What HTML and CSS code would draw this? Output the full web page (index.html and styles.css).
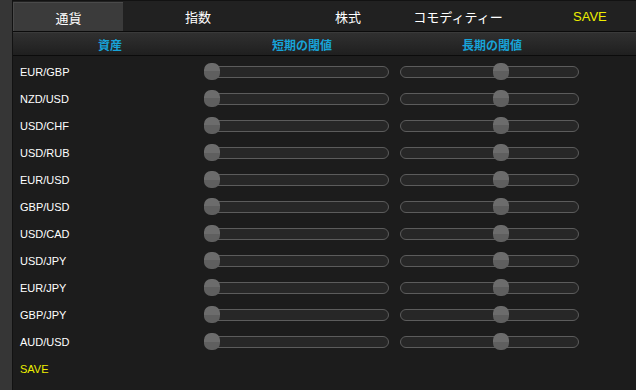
FILE: index.html
```html
<!DOCTYPE html>
<html lang="ja">
<head>
<meta charset="utf-8">
<link rel="stylesheet" href="styles.css">
</head>
<body>
<div class="app">
  <nav class="tabs">
    <div class="tab t1 active">通貨</div>
    <div class="tab t2">指数</div>
    <div class="tab t3">株式</div>
    <div class="tab t4">コモディティー</div>
    <div class="tab t5 save">SAVE</div>
  </nav>
  <div class="head">
    <div class="hc">資産</div>
    <div class="hc">短期の閾値</div>
    <div class="hc">長期の閾値</div>
  </div>
  <div class="rows">
    <div class="row"><div class="lbl">EUR/GBP</div><div class="c2"><div class="track s1"><span class="thumb a"></span></div></div><div class="c3"><div class="track s2"><span class="thumb b"></span></div></div></div>
    <div class="row"><div class="lbl">NZD/USD</div><div class="c2"><div class="track s1"><span class="thumb a"></span></div></div><div class="c3"><div class="track s2"><span class="thumb b"></span></div></div></div>
    <div class="row"><div class="lbl">USD/CHF</div><div class="c2"><div class="track s1"><span class="thumb a"></span></div></div><div class="c3"><div class="track s2"><span class="thumb b"></span></div></div></div>
    <div class="row"><div class="lbl">USD/RUB</div><div class="c2"><div class="track s1"><span class="thumb a"></span></div></div><div class="c3"><div class="track s2"><span class="thumb b"></span></div></div></div>
    <div class="row"><div class="lbl">EUR/USD</div><div class="c2"><div class="track s1"><span class="thumb a"></span></div></div><div class="c3"><div class="track s2"><span class="thumb b"></span></div></div></div>
    <div class="row"><div class="lbl">GBP/USD</div><div class="c2"><div class="track s1"><span class="thumb a"></span></div></div><div class="c3"><div class="track s2"><span class="thumb b"></span></div></div></div>
    <div class="row"><div class="lbl">USD/CAD</div><div class="c2"><div class="track s1"><span class="thumb a"></span></div></div><div class="c3"><div class="track s2"><span class="thumb b"></span></div></div></div>
    <div class="row"><div class="lbl">USD/JPY</div><div class="c2"><div class="track s1"><span class="thumb a"></span></div></div><div class="c3"><div class="track s2"><span class="thumb b"></span></div></div></div>
    <div class="row"><div class="lbl">EUR/JPY</div><div class="c2"><div class="track s1"><span class="thumb a"></span></div></div><div class="c3"><div class="track s2"><span class="thumb b"></span></div></div></div>
    <div class="row"><div class="lbl">GBP/JPY</div><div class="c2"><div class="track s1"><span class="thumb a"></span></div></div><div class="c3"><div class="track s2"><span class="thumb b"></span></div></div></div>
    <div class="row"><div class="lbl">AUD/USD</div><div class="c2"><div class="track s1"><span class="thumb a"></span></div></div><div class="c3"><div class="track s2"><span class="thumb b"></span></div></div></div>
    <div class="row"><div class="lbl save">SAVE</div></div>
  </div>
</div>
</body>
</html>
```

FILE: styles.css
```css
html, body {
  margin: 0;
  padding: 0;
  height: 100%;
  overflow: hidden;
}
body {
  background: #363636;
  font-family: "Liberation Sans", "Noto Sans CJK JP", sans-serif;
}
.app {
  margin-left: 12px;
  border-left: 1px solid #121212;
  background: #1c1c1c;
  height: 390px;
  overflow: hidden;
}
.tabs {
  display: flex;
  height: 30px;
  background: #212121;
  border-top: 1px solid #121212;
  border-bottom: 1px solid #0b0b0b;
}
.tab {
  display: flex;
  align-items: center;
  justify-content: center;
  color: #ffffff;
  font-size: 13px;
  font-family: "Noto Sans CJK JP", sans-serif;
  white-space: nowrap;
  box-sizing: border-box;
}
.tab.active {
  background: #3b3b3b;
  border-top: 1px solid #4a4a4a;
  border-left: 1px solid #4a4a4a;
  margin-top: 1px;
}
.t1 { width: 110px; }
.t2 { width: 150px; }
.t3 { width: 150px; }
.t4 { width: 70px; }
.t5 {
  flex: 1;
  justify-content: flex-start;
  padding-left: 80px;
  font-family: "Liberation Sans", sans-serif;
}
.save { color: #eeee00; }
.head {
  display: flex;
  height: 22px;
  background: linear-gradient(#303030, #1f1f1f);
  border-top: 1px solid #3a3a3a;
  border-left: 1px solid #3a3a3a;
  margin-left: -1px;
  border-bottom: 1px solid #0b0b0b;
}
.hc {
  width: 190px;
  display: flex;
  align-items: center;
  justify-content: center;
  color: #17a3d8;
  font-family: "Noto Sans CJK JP", sans-serif;
  font-weight: bold;
  font-size: 12px;
}
.hc:first-child { width: 194px; }
.rows {
  padding-top: 2px;
}
.row {
  display: flex;
  align-items: center;
  height: 27px;
}
.lbl {
  width: 183px;
  padding-left: 7px;
  color: #ffffff;
  font-size: 11px;
}
.lbl.save { color: #eeee00; }
.c2, .c3 {
  width: 190px;
  display: flex;
  align-items: center;
}
.track {
  position: relative;
  height: 10px;
  border: 1px solid #5c5c5c;
  border-radius: 6px;
  background: #272727;
}
.s1 { width: 183px; margin-left: 1px; }
.s2 { width: 177px; margin-left: 7px; }
.thumb {
  position: absolute;
  top: -4px;
  width: 16px;
  height: 17px;
  border-radius: 7px;
  background: linear-gradient(#6c6c6c 0, #6c6c6c 50%, #5f5f5f 50%, #5f5f5f 100%);
}
.thumb.a { left: -1px; }
.thumb.b { left: 92px; }
```
